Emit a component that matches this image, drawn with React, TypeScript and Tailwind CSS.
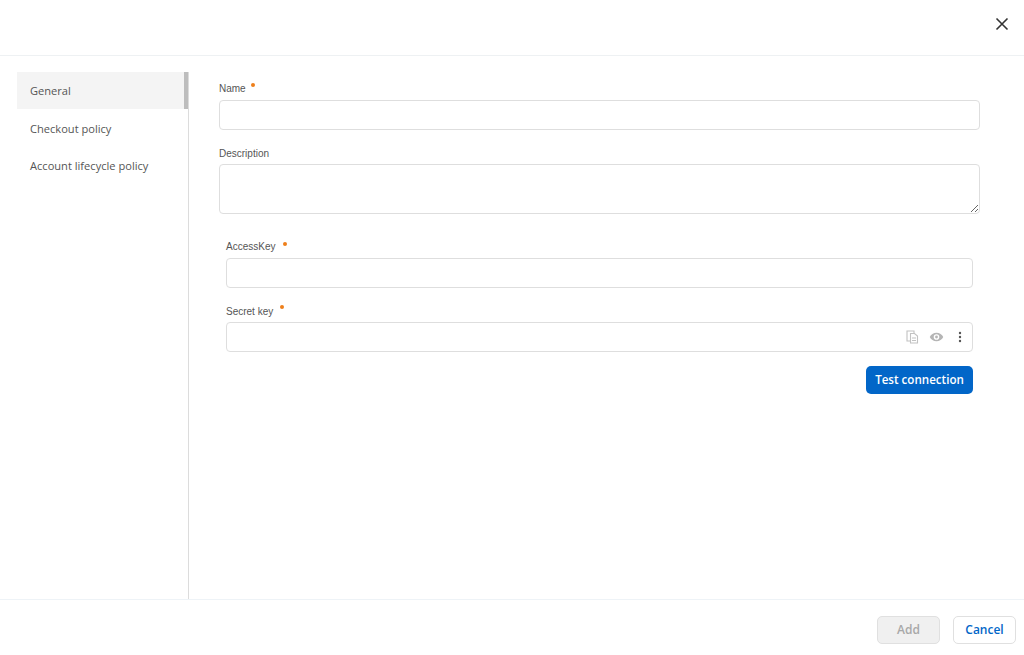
import React from "react";

const labelCls = "font-['Liberation_Sans',Arial,sans-serif] text-[10px] leading-[12px] text-[#555]";
const inputCls = "block w-full h-[30px] rounded-[4px] border border-[#dedede] bg-white outline-none";

function Dot({ className }: { className: string }) {
  return <span className={`inline-block w-[4px] h-[4px] rounded-full bg-[#ee7f1a] ${className}`} />;
}

export default function App() {
  return (
    <div className="w-[1024px] h-[655px] bg-white flex flex-col overflow-hidden font-['Open_Sans',sans-serif]">
      <header className="h-[56px] shrink-0 border-b border-[#eef1f3] flex justify-end pt-[16px] pr-[14px]">
        <svg width="16" height="16" viewBox="0 0 16 16" fill="none" stroke="#333" strokeWidth="1.6">
          <path d="M2.5 2.5 13.5 13.5M13.5 2.5 2.5 13.5" />
        </svg>
      </header>

      <main className="flex-1 flex pl-[17px] pt-[16px] min-h-0">
        <nav className="w-[172px] shrink-0 border-r border-[#dcdcdc] text-[11.1px] text-[#555]">
          <div className="h-[37px] bg-[#f4f4f4] border-r-[4px] border-[#bdbdbd] pl-[13px] pt-[2px] flex items-center">General</div>
          <div className="h-[38px] pl-[13px] pt-[2px] flex items-center">Checkout policy</div>
          <div className="h-[38px] pl-[13px] flex items-center">Account lifecycle policy</div>
        </nav>

        <section className="w-[761px] ml-[30px]">
          <div className="flex items-start h-[28px] pt-[11px]">
            <span className={labelCls}>Name</span>
            <Dot className="ml-[5px] mt-[0px]" />
          </div>
          <input className={inputCls} aria-label="Name" />

          <div className={`${labelCls} mt-[18px] mb-[4px]`}>Description</div>
          <textarea className="block w-full h-[50px] rounded-[4px] border border-[#dedede] bg-white outline-none" aria-label="Description" />

          <div className="mx-[7px]">
            <div className="flex items-start mt-[27px] mb-[5px]">
              <span className={labelCls}>AccessKey</span>
              <Dot className="ml-[8px] mt-[1px]" />
            </div>
            <input className={inputCls} aria-label="AccessKey" />

            <div className="flex items-start mt-[18px] mb-[4px]">
              <span className={labelCls}>Secret key</span>
              <Dot className="ml-[7px] mt-[-1px]" />
            </div>
            <div className="h-[30px] rounded-[4px] border border-[#dedede] flex items-center justify-end pr-[10px]">
              <svg width="13" height="14" viewBox="0 0 13 14" fill="none" stroke="#c2c2c2" strokeWidth="1.1">
                <path d="M8 3V1H1v10h3" />
                <path d="M4.5 3.5h4l3 2.5v7h-7z" />
                <path d="M6 8h4M6 10.5h4" />
              </svg>
              <svg className="ml-[10px]" width="15" height="12" viewBox="0 0 16 12">
                <path fillRule="evenodd" fill="#b5b5b5" d="M8 1.5C4.8 1.5 2 3.4.8 6 2 8.6 4.8 10.5 8 10.5S14 8.6 15.2 6C14 3.4 11.2 1.5 8 1.5ZM8 9a3 3 0 1 1 0-6 3 3 0 0 1 0 6Zm0-1.5a1.5 1.5 0 1 0 0-3 1.5 1.5 0 0 0 0 3Z" />
              </svg>
              <svg className="ml-[14px]" width="4" height="12" viewBox="0 0 4 12" fill="#555">
                <circle cx="2" cy="2" r="1.2" />
                <circle cx="2" cy="6" r="1.2" />
                <circle cx="2" cy="10" r="1.2" />
              </svg>
            </div>
            <div className="flex justify-end mt-[14px]">
              <button className="w-[107px] h-[28px] rounded-[5px] bg-[#0266c8] text-white text-[11.6px] font-semibold">Test connection</button>
            </div>
          </div>
        </section>
      </main>

      <footer className="h-[56px] shrink-0 border-t border-[#eef3f7] flex justify-end items-start pt-[16px] pr-[8px] gap-[13px]">
        <button disabled className="w-[63px] h-[28px] rounded-[5px] border border-[#e0e0e0] bg-[#f0f0f0] text-[#a8a8a8] text-[12px] font-semibold">Add</button>
        <button className="w-[63px] h-[28px] rounded-[5px] border border-[#e0e0e0] bg-white text-[#0266c8] text-[12px] font-semibold">Cancel</button>
      </footer>
    </div>
  );
}
